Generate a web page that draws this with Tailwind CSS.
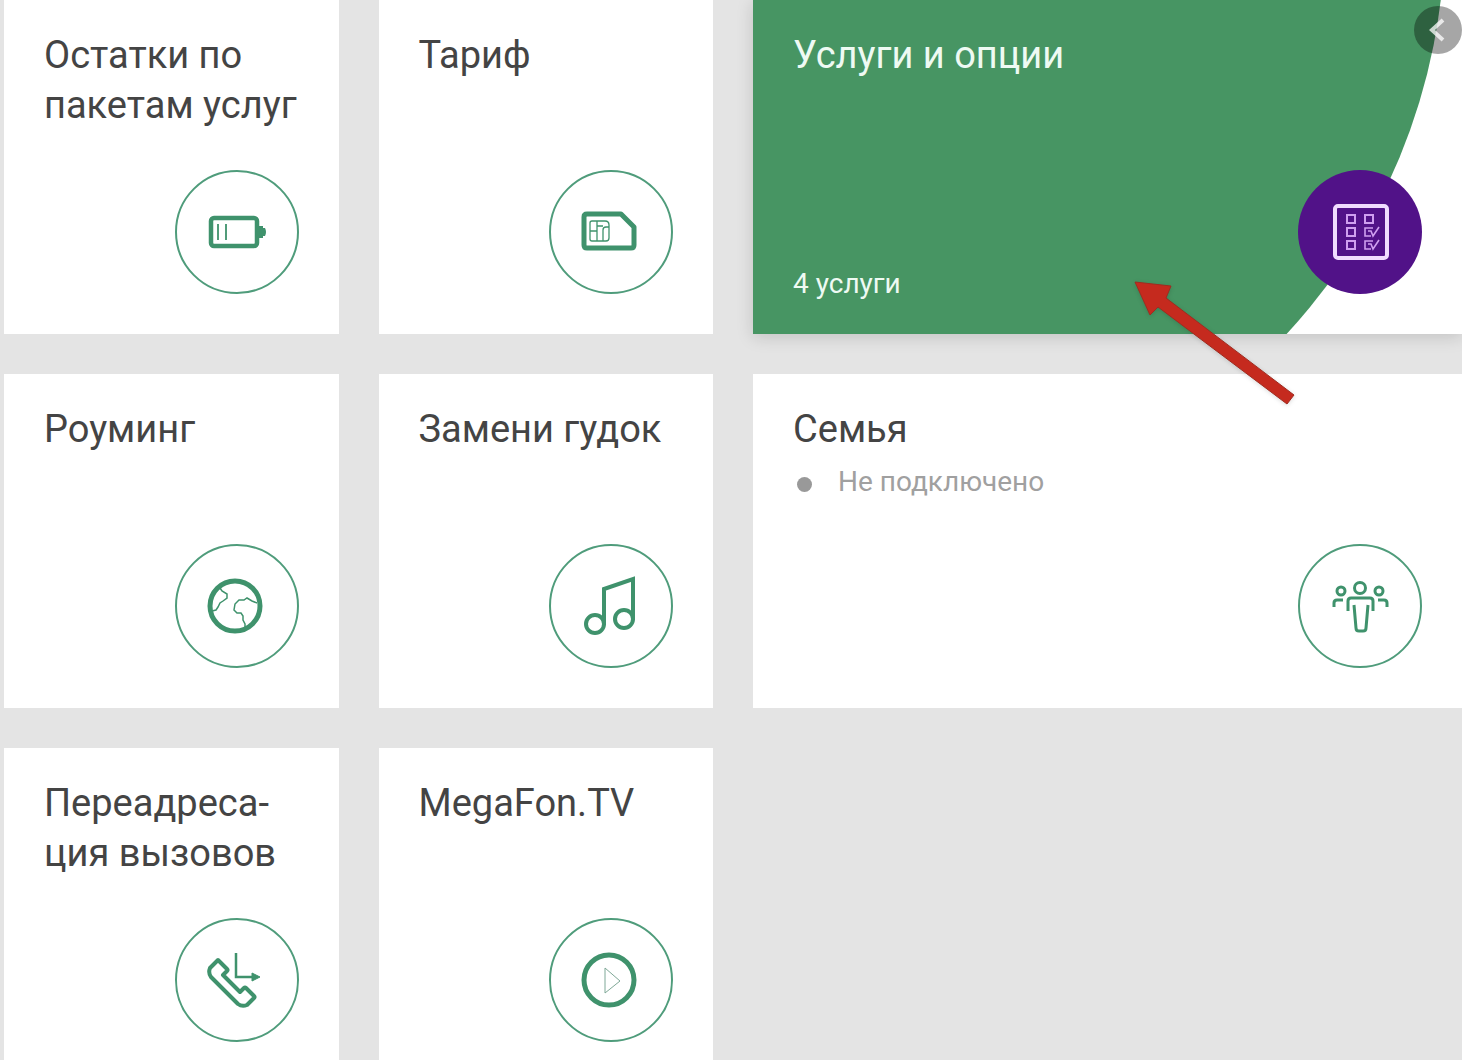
<!DOCTYPE html>
<html lang="ru">

<head>
    <meta charset="UTF-8" />
    <meta name="viewport" content="width=device-width, initial-scale=1.0" />
    <title>Личный кабинет</title>
    <script src="https://cdn.jsdelivr.net/npm/@tailwindcss/browser@4"></script>
</head>

<body class="h-screen overflow-hidden bg-[#e4e4e4] text-[#444444] font-['Roboto',sans-serif]">

    <main class="relative grid grid-cols-4 auto-rows-[334px] gap-10 pl-1">

        <a href="#balance" class="flex flex-col bg-white px-10 pt-[30px] pb-10">
            <h2 class="text-[38px] leading-[50px] whitespace-nowrap">Остатки по<br>пакетам услуг</h2>
            <span class="mt-auto self-end w-31 h-31 rounded-full border-2 border-[#4f9c7b] text-[#3f926c]">
                <svg class="w-full h-full" viewBox="2 0 120 120" fill="none" stroke="currentColor">
                    <rect x="36" y="46" width="46" height="28" rx="3" stroke-width="4.5" />
                    <path d="M43 52v16M51 52v16" stroke-width="1.8" />
                    <path d="M84 54h4v2h2q2 4 0 8h-2v2h-4z" fill="currentColor" stroke="none" />
                </svg>
            </span>
        </a>

        <a href="#tariff" class="flex flex-col bg-white px-10 pt-[30px] pb-10">
            <h2 class="text-[38px] leading-[50px]">Тариф</h2>
            <span class="mt-auto self-end w-31 h-31 rounded-full border-2 border-[#4f9c7b] text-[#3f926c]">
                <svg class="w-full h-full" viewBox="1 0 120 120" fill="none" stroke="currentColor" stroke-linejoin="round">
                    <path d="M37 42h34l13 13v18q0 3-3 3H37q-3 0-3-3V45q0-3 3-3z" stroke-width="5" />
                    <path d="M42 49h13q4 0 4 4v13q0 3-3 3H42q-2 0-2-2V51q0-2 2-2zM40 59h7M47 49v10M47 59v10M47 54h6M53 69V58q0-3 3-3h3" stroke-width="1.3" />
                </svg>
            </span>
        </a>

        <a href="#services" class="relative z-10 col-span-2 flex flex-col justify-between bg-white px-10 pt-[30px] pb-[30px] text-[#eefaf3] shadow-[0_3px_16px_rgba(0,0,0,0.15)]">
            <svg class="absolute inset-0 w-full h-full" viewBox="0 0 709 334" preserveAspectRatio="xMaxYMin slice">
                <circle cx="95" cy="-71" r="597" fill="#479563" />
            </svg>
            <h2 class="relative text-[38px] leading-[50px]">Услуги и опции</h2>
            <p class="relative text-[28px] leading-10">4 услуги</p>
            <span class="absolute right-10 bottom-10 w-31 h-31 rounded-full bg-[#511288] text-[#f1dcff]">
                <svg class="w-full h-full" viewBox="0 0 124 124" fill="none" stroke="currentColor">
                    <rect x="37" y="36" width="52" height="52" rx="3" stroke-width="4" />
                    <g stroke="#cf9ff0" stroke-width="2">
                        <path d="M49 45h8v8h-8zM67 45h8v8h-8zM49 58h8v8h-8zM49 71h8v8h-8z" />
                        <path d="M75 58h-8v8h6M70 61h3l2 5 6-9M75 71h-8v8h6M70 74h3l2 5 6-9" stroke-width="1.6" />
                    </g>
                </svg>
            </span>
            <!-- pointer arrow -->
            <svg class="absolute right-[164px] top-[278px] w-[168px] h-[132px] drop-shadow-sm" viewBox="0 0 168 132">
                <path d="M5 4l36 4-5 12 128 97-7 9L28 29l-8 8z" fill="#c52a1e" stroke="#9f2c20" stroke-width="1" />
            </svg>
        </a>

        <a href="#roaming" class="flex flex-col bg-white px-10 pt-[30px] pb-10">
            <h2 class="text-[38px] leading-[50px]">Роуминг</h2>
            <span class="mt-auto self-end w-31 h-31 rounded-full border-2 border-[#4f9c7b] text-[#3f926c]">
                <svg class="w-full h-full" viewBox="1 0 120 120" fill="none" stroke="currentColor">
                    <circle cx="59" cy="60" r="25" stroke-width="5" />
                    <path d="M44 42l2 3 5 3v4l-4 3-3 2-2 4-2 3-4 1M81 57l-5-2-5-3-3 2h-5l-4 4-1 6 3 3h4l2 3v4l2 4v3" stroke-width="1.5" />
                </svg>
            </span>
        </a>

        <a href="#ringtone" class="flex flex-col bg-white px-10 pt-[30px] pb-10">
            <h2 class="text-[38px] leading-[50px] whitespace-nowrap">Замени гудок</h2>
            <span class="mt-auto self-end w-31 h-31 rounded-full border-2 border-[#4f9c7b] text-[#3f926c]">
                <svg class="w-full h-full" viewBox="1 0 120 120" fill="none" stroke="currentColor" stroke-width="4">
                    <circle cx="45" cy="78" r="9" />
                    <circle cx="74" cy="73" r="9" />
                    <path d="M54 79V43l29-10v41" />
                </svg>
            </span>
        </a>

        <a href="#family" class="col-span-2 flex flex-col bg-white px-10 pt-[30px] pb-10">
            <h2 class="text-[38px] leading-[50px]">Семья</h2>
            <p class="mt-2 flex items-center gap-[26px] pl-1 text-[28px] leading-10 text-[#a0a0a0]">
                <span class="mt-1 w-[15px] h-[15px] rounded-full bg-[#999999]"></span>Не подключено
            </p>
            <span class="mt-auto self-end w-31 h-31 rounded-full border-2 border-[#4f9c7b] text-[#3f926c]">
                <svg class="w-full h-full" viewBox="0 0 120 120" fill="none" stroke="currentColor" stroke-width="3">
                    <circle cx="60" cy="42" r="5.5" />
                    <circle cx="41" cy="45" r="4" />
                    <circle cx="79" cy="45" r="4" />
                    <path d="M48 65V55q0-3 3-3h19q3 0 3 3v10M54 59l2 23q0 3 3 3h4q3 0 3-3l2-23M34 61v-4q0-3 3-3h6M87 61v-4q0-3-3-3h-6" />
                </svg>
            </span>
        </a>

        <a href="#forwarding" class="flex flex-col bg-white px-10 pt-[30px] pb-10">
            <h2 class="text-[38px] leading-[50px] whitespace-nowrap">Переадреса-<br>ция вызовов</h2>
            <span class="mt-auto self-end w-31 h-31 rounded-full border-2 border-[#4f9c7b] text-[#3f926c]">
                <svg class="w-full h-full" viewBox="2 0 120 120" fill="none" stroke="currentColor" stroke-linejoin="round">
                    <path d="M43 40l9 9q1 1 0 2l-4 4 17 17 4-4q1-1 2 0l8 8q1 1 0 2l-7 7q-5 2-9-1L36 57q-3-4-1-9z" stroke-width="4" />
                    <path d="M61 33v24h17" stroke-width="2.5" stroke-linejoin="miter" />
                    <path d="M77 53l8 4-8 4z" fill="currentColor" />
                </svg>
            </span>
        </a>

        <a href="#tv" class="flex flex-col bg-white px-10 pt-[30px] pb-10">
            <h2 class="text-[38px] leading-[50px]">MegaFon.TV</h2>
            <span class="mt-auto self-end w-31 h-31 rounded-full border-2 border-[#4f9c7b] text-[#3f926c]">
                <svg class="w-full h-full" viewBox="1 0 120 120" fill="none" stroke="currentColor">
                    <circle cx="59" cy="60" r="25" stroke-width="5" />
                    <path d="M55 48v25l15-12z" stroke-width="1" stroke="#7fa897" />
                </svg>
            </span>
        </a>

        <button type="button" aria-label="Назад" class="absolute z-20 top-1.5 right-0 w-12 h-12 rounded-full bg-black/35 text-white/75">
            <svg class="w-full h-full" viewBox="0 0 48 48" fill="none" stroke="currentColor" stroke-width="4">
                <path d="M29 14L18 24l11 10" />
            </svg>
        </button>
    </main>

</body>

</html>
